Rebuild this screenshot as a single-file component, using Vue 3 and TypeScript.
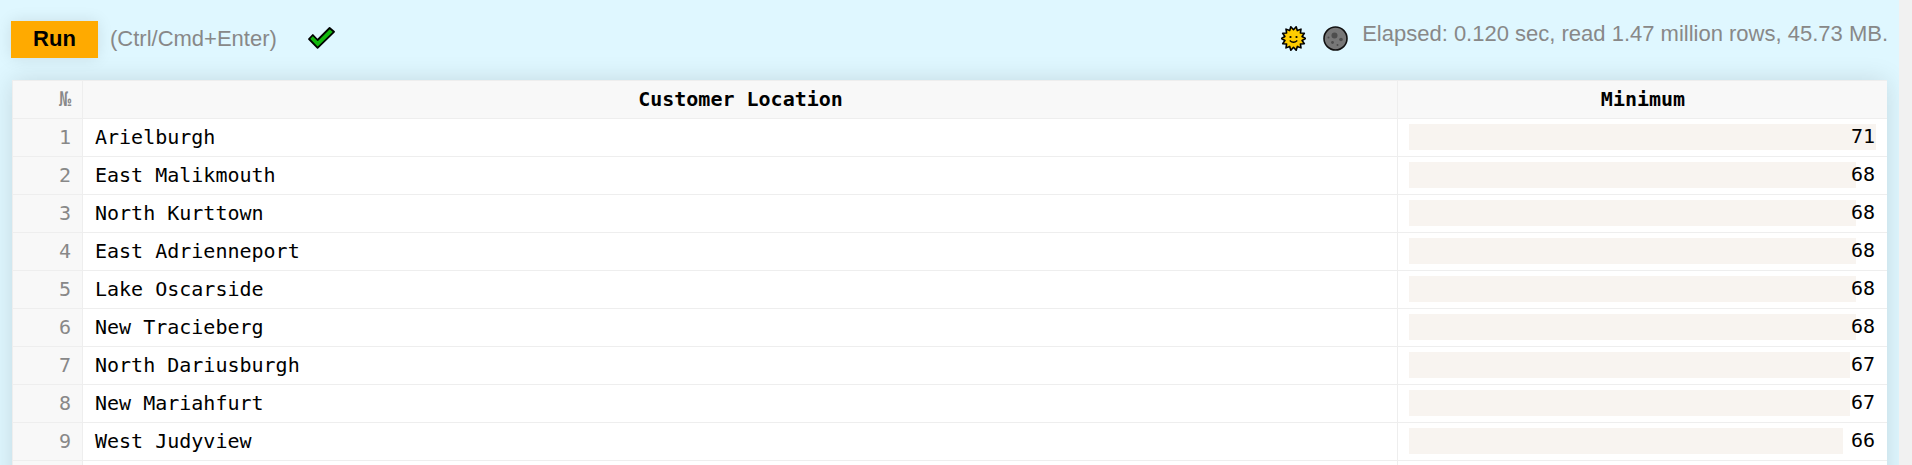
<script setup lang="ts">
interface Row { name: string; value: number | null; width: number }
const rows: Row[] = [
  { name: 'Arielburgh', value: 71, width: 100 },
  { name: 'East Malikmouth', value: 68, width: 95.8 },
  { name: 'North Kurttown', value: 68, width: 95.8 },
  { name: 'East Adrienneport', value: 68, width: 95.8 },
  { name: 'Lake Oscarside', value: 68, width: 95.8 },
  { name: 'New Tracieberg', value: 68, width: 95.8 },
  { name: 'North Dariusburgh', value: 67, width: 94.4 },
  { name: 'New Mariahfurt', value: 67, width: 94.4 },
  { name: 'West Judyview', value: 66, width: 92.9 },
]
const rays = Array.from({ length: 14 }, (_, i) => {
  const a = (i * Math.PI * 2) / 14
  const b = a + Math.PI / 14
  return `${(12.5 + 12 * Math.cos(a)).toFixed(2)},${(12.5 + 12 * Math.sin(a)).toFixed(2)} ${(12.5 + 8.8 * Math.cos(b)).toFixed(2)},${(12.5 + 8.8 * Math.sin(b)).toFixed(2)}`
}).join(' ')
</script>

<template>
  <div class="page">
    <main class="main">
      <div class="toolbar">
        <button class="run">Run</button>
        <span class="hint">(Ctrl/Cmd+Enter)</span>
        <svg class="check" viewBox="0 0 27 22" width="27" height="22">
          <path d="M1 12 L4.8 8 L9.6 13 L21.6 1 L26 4.8 L9.6 20.8 Z" fill="#12b80e" stroke="#000" stroke-width="1.8" stroke-linejoin="round" />
        </svg>
        <span class="spacer"></span>
        <svg class="icon" viewBox="0 0 25 25" width="25" height="25">
          <polygon :points="rays" fill="#ffcc00" stroke="#000" stroke-width="1.6" stroke-linejoin="round" />
          <circle cx="9.5" cy="11" r="1.1" fill="#000" />
          <circle cx="15.5" cy="11" r="1.1" fill="#000" />
          <path d="M8.7 14.5 Q12.5 18 16.3 14.5" fill="none" stroke="#000" stroke-width="1.2" />
        </svg>
        <svg class="icon moon" viewBox="0 0 25 25" width="25" height="25">
          <circle cx="12.5" cy="12.5" r="11.5" fill="#777" stroke="#111" stroke-width="1.6" />
          <circle cx="11.5" cy="9.5" r="3" fill="#4e4e4e" />
          <circle cx="18" cy="13.5" r="1.8" fill="#4e4e4e" />
          <circle cx="9.5" cy="16.5" r="1.4" fill="#4e4e4e" />
          <circle cx="14.5" cy="19" r="1" fill="#4e4e4e" />
          <circle cx="5.5" cy="11.5" r="1" fill="#4e4e4e" />
        </svg>
        <span class="stats">Elapsed: 0.120 sec, read 1.47 million rows, 45.73 MB.</span>
      </div>
      <table class="grid">
        <colgroup>
          <col class="c-num" />
          <col class="c-name" />
          <col class="c-val" />
        </colgroup>
        <thead>
          <tr>
            <th class="num">№</th>
            <th>Customer Location</th>
            <th>Minimum</th>
          </tr>
        </thead>
        <tbody>
          <tr v-for="(r, i) in rows" :key="r.name">
            <td class="num">{{ i + 1 }}</td>
            <td>{{ r.name }}</td>
            <td class="val">
              <div class="barwrap">
                <div class="bar" :style="{ width: r.width + '%' }"></div>
                <span class="figure">{{ r.value }}</span>
              </div>
            </td>
          </tr>
          <tr class="blank">
            <td class="num"></td>
            <td></td>
            <td></td>
          </tr>
        </tbody>
      </table>
    </main>
    <div class="scrollbar"></div>
  </div>
</template>

<style>
html, body { margin: 0; overflow: hidden; }
</style>

<style scoped>
.page {
  display: flex;
  width: 1912px;
  height: 465px;
  overflow: hidden;
  font-family: "Liberation Sans", "DejaVu Sans", sans-serif;
}
.main {
  flex: 1;
  min-width: 0;
  padding: 0 12px;
  background: #dff7ff;
  overflow: hidden;
}
.scrollbar {
  width: 13px;
  background: #f1f1f1;
}
.toolbar {
  display: flex;
  align-items: center;
  height: 80px;
  padding-bottom: 6px;
  margin-right: -1px;
  box-sizing: border-box;
}
.run {
  width: 87px;
  height: 37px;
  margin-left: -1px;
  margin-top: 5px;
  border: 0;
  padding: 0 0 2px;
  background: #ffaa00;
  color: #000;
  font: bold 22px "Liberation Sans", sans-serif;
  box-shadow: 0 0 16px rgba(0, 0, 0, 0.1);
}
.hint {
  margin-left: 12px;
  margin-top: 4px;
  color: #888;
  font-size: 22px;
}
.check { margin-left: 31px; margin-top: 1px; }
.spacer { flex: 1; }
.icon { flex: none; margin-top: 3px; }
.moon { margin-left: 17px; }
.stats {
  margin-left: 14px;
  margin-bottom: 6px;
  color: #888;
  font-size: 22px;
  white-space: nowrap;
}
.grid {
  width: 1875px;
  table-layout: fixed;
  border-collapse: separate;
  border-spacing: 0;
  background: #fff;
  box-shadow: 0 0 24px rgba(0, 0, 0, 0.12);
  font-family: "DejaVu Sans Mono", "Liberation Mono", monospace;
  font-size: 20px;
  color: #000;
}
.c-num { width: 71px; }
.c-val { width: 489px; }
th, td {
  height: 38px;
  box-sizing: border-box;
  border-right: 1px solid #eee;
  border-bottom: 1px solid #eee;
  padding: 0 11px 1px 12px;
  white-space: nowrap;
}
th:last-child, td:last-child { border-right: 0; }
th {
  height: 39px;
  border-top: 1px solid #eee;
  background: #f8f8f8;
  font-weight: bold;
  text-align: center;
}
th:first-child, td:first-child { border-left: 1px solid #eee; }
.num {
  background: #f8f8f8;
  color: #888;
  text-align: right;
  font-weight: normal;
}
.val { padding: 0 11px; }
.barwrap {
  position: relative;
  height: 26px;
  margin-bottom: 1px;
}
.bar {
  height: 100%;
  background: #f8f4f0;
}
.figure {
  position: absolute;
  top: -1px;
  right: 1px;
  line-height: 26px;
}
</style>
